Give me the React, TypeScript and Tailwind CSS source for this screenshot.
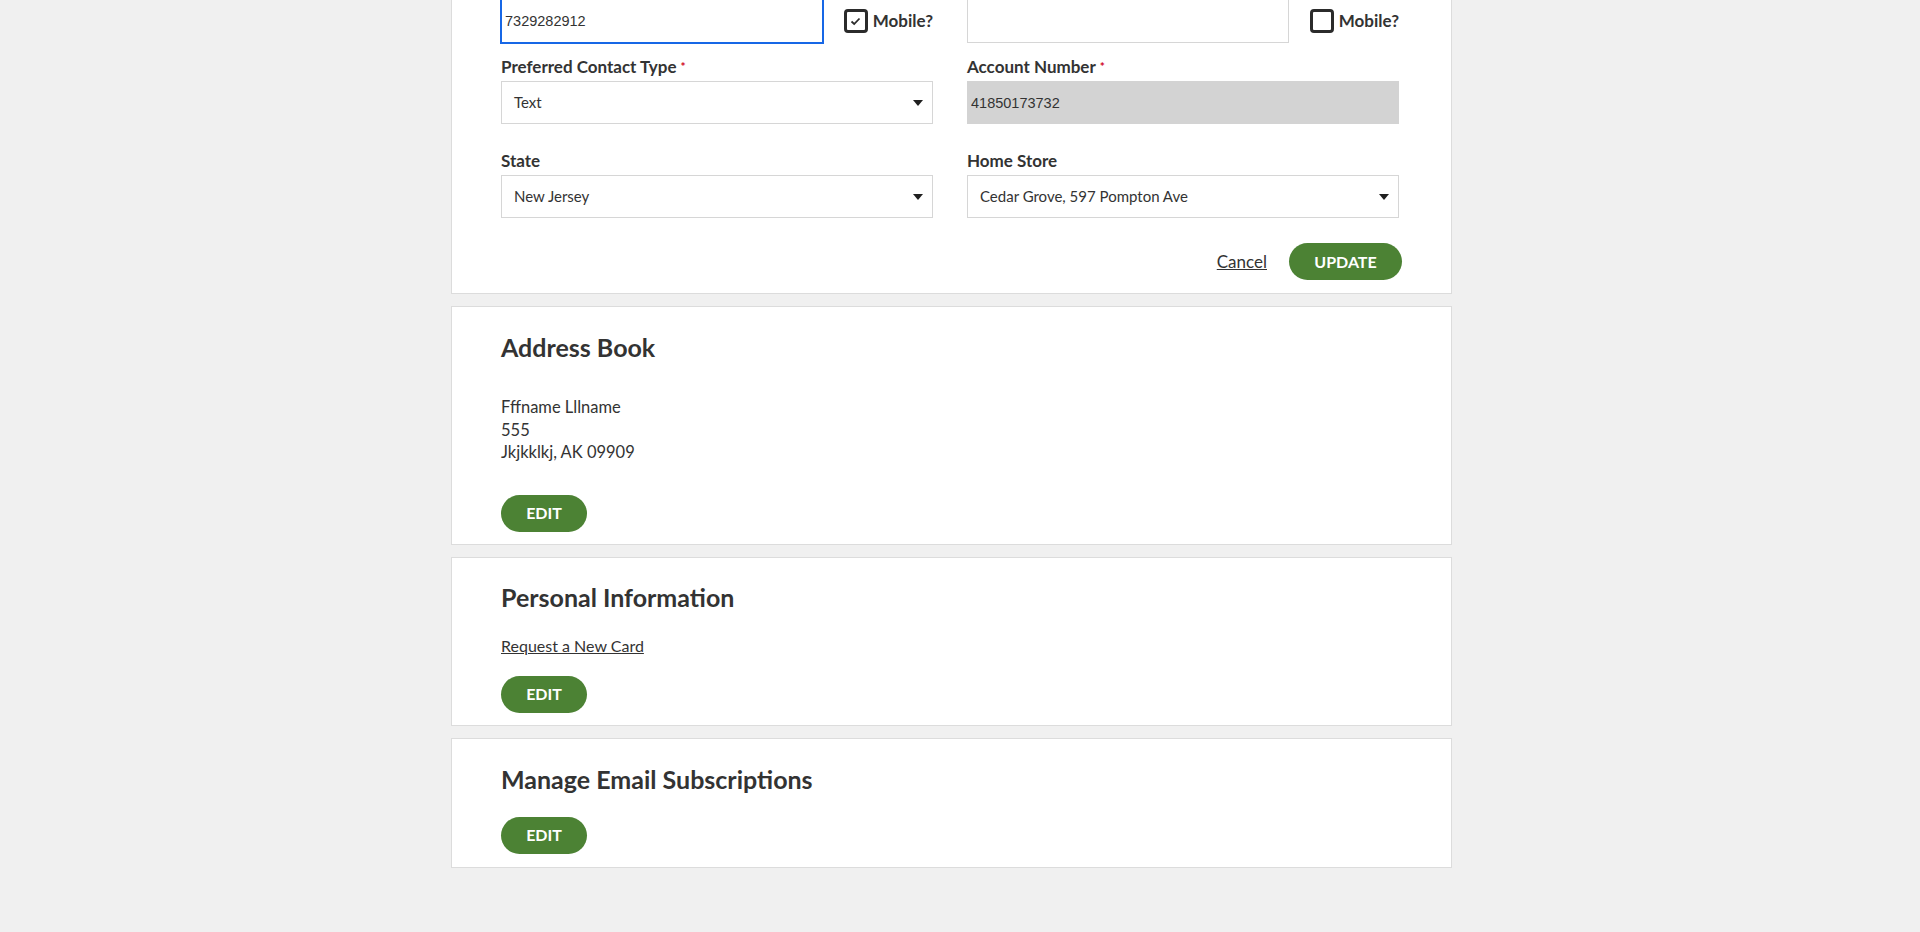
import React from "react";

const font = "font-['Lato','Noto_Sans',sans-serif]";

function Caret() {
  return (
    <svg width="10" height="6" viewBox="0 0 10 6" className="shrink-0">
      <path d="M0 0 H10 L5 6 Z" fill="#1f1f1f" />
    </svg>
  );
}

function Checkbox({ checked }: { checked?: boolean }) {
  return (
    <span className="w-6 h-6 shrink-0 rounded-[4px] border-[3px] border-[#2b2b2b] bg-white flex items-center justify-center">
      {checked && (
        <svg width="11" height="9" viewBox="0 0 11 9">
          <path d="M1.5 4.5 L4.2 7 L9.5 1.5" fill="none" stroke="#2b2b2b" strokeWidth="1.8" />
        </svg>
      )}
    </span>
  );
}

function Label({ text, required }: { text: string; required?: boolean }) {
  return (
    <div className="text-[17px] leading-6 font-bold text-[#333] mb-[2px]">
      {text}
      {required && <span className="text-[#d0021b] text-[12px] align-top ml-1">*</span>}
    </div>
  );
}

function Select({ value }: { value: string }) {
  return (
    <div className="h-[43px] border border-[#d6d6d6] bg-white flex items-center justify-between pl-3 pr-[9px] text-[15px] text-[#333]">
      <span>{value}</span>
      <Caret />
    </div>
  );
}

function PhoneRow({ value, focused }: { value: string; focused?: boolean }) {
  return (
    <div className="flex items-center gap-[21px] -mt-px">
      <input
        readOnly
        value={value}
        className={
          focused
            ? "flex-1 min-w-0 h-[44px] border border-[#1767e6] ring-1 ring-[#1767e6] bg-white px-[3px] text-[14.5px] text-[#333] font-['Liberation_Sans',Arial,sans-serif] outline-none"
            : "flex-1 min-w-0 h-[44px] border border-[#d6d6d6] bg-white px-[3px] text-[14.5px] text-[#333] font-['Liberation_Sans',Arial,sans-serif] outline-none"
        }
      />
      <label className="flex items-center gap-[5px] text-[17px] font-bold text-[#333]">
        <Checkbox checked={focused} />
        Mobile?
      </label>
    </div>
  );
}

function EditButton() {
  return (
    <button className="w-[86px] h-[37px] rounded-full bg-[#4c8234] text-white text-[16px] font-bold">
      EDIT
    </button>
  );
}

function Card({ children, className = "" }: { children: React.ReactNode; className?: string }) {
  return (
    <section className={"bg-white border border-[#dcdcdc] px-[49px] " + className}>
      {children}
    </section>
  );
}

export default function App() {
  return (
    <div className={"min-h-[932px] bg-[#f0f0f0] text-[#333] " + font}>
      <div className="ml-[451px] w-[1001px] flex flex-col gap-3 pb-16">
        <section className="bg-white border-x border-b border-[#dcdcdc] px-[49px] pb-[13px]">
          <div className="grid grid-cols-[432px_432px] gap-x-[34px]">
            <div>
              <PhoneRow value="7329282912" focused />
              <div className="mt-[12px]">
                <Label text="Preferred Contact Type" required />
                <Select value="Text" />
              </div>
              <div className="mt-[25px]">
                <Label text="State" />
                <Select value="New Jersey" />
              </div>
            </div>
            <div>
              <PhoneRow value="" />
              <div className="mt-[12px]">
                <Label text="Account Number" required />
                <input
                  readOnly
                  value="41850173732"
                  className="w-full h-[43px] bg-[#d3d3d3] border border-[#d3d3d3] px-[3px] text-[14.5px] text-[#333] font-['Liberation_Sans',Arial,sans-serif] outline-none"
                />
              </div>
              <div className="mt-[25px]">
                <Label text="Home Store" />
                <Select value="Cedar Grove, 597 Pompton Ave" />
              </div>
            </div>
          </div>
          <div className="flex justify-end items-center gap-[22px] mt-[25px]">
            <a href="#" className="underline text-[17px] text-[#333]">
              Cancel
            </a>
            <button className="w-[113px] h-[37px] rounded-full bg-[#4c8234] text-white text-[16px] font-bold">
              UPDATE
            </button>
          </div>
        </section>

        <Card className="pt-[24px] pb-[12px]">
          <h2 className="text-[25px] leading-8 font-bold text-[#333]">Address Book</h2>
          <div className="mt-[33px] text-[16.5px] leading-[22.5px] text-[#333]">
            <div>Fffname Lllname</div>
            <div>555</div>
            <div>Jkjkklkj, AK 09909</div>
          </div>
          <div className="mt-[31px]">
            <EditButton />
          </div>
        </Card>

        <Card className="pt-[23px] pb-[12px]">
          <h2 className="text-[25px] leading-8 font-bold text-[#333]">Personal Information</h2>
          <a href="#" className="block mt-[22px] text-[16px] leading-[22px] underline text-[#333]">
            Request a New Card
          </a>
          <div className="mt-[19px]">
            <EditButton />
          </div>
        </Card>

        <Card className="pt-[24px] pb-[13px]">
          <h2 className="text-[25px] leading-8 font-bold text-[#333]">Manage Email Subscriptions</h2>
          <div className="mt-[22px]">
            <EditButton />
          </div>
        </Card>
      </div>
    </div>
  );
}
